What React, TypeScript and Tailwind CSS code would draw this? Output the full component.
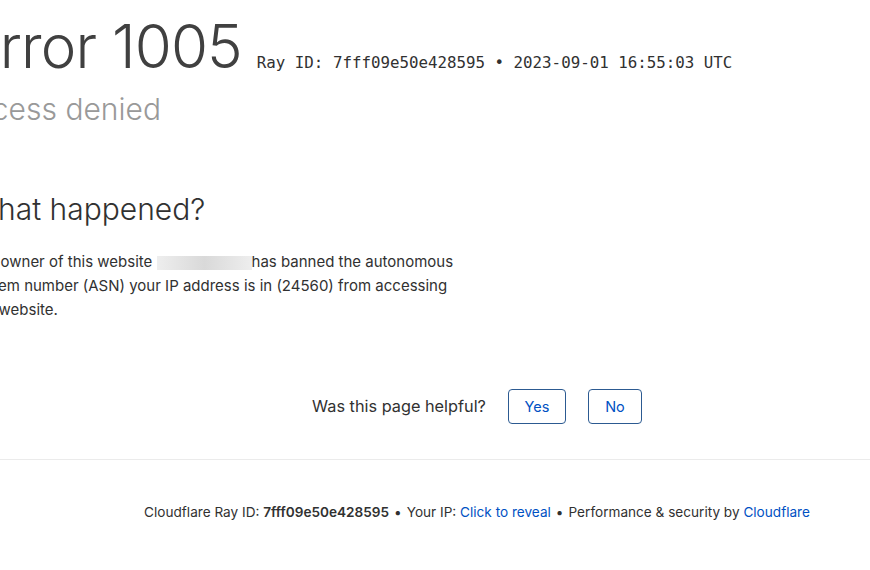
import React from "react";

export default function App() {
  const sans = { fontFamily: 'Inter, "Noto Sans", sans-serif' };
  return (
    <div className="w-[870px] h-[570px] overflow-hidden bg-white" style={sans}>
      <div className="w-[1016px] ml-[-31px]">
        <div className="pt-[9px]">
          <div className="flex items-baseline">
            <h1 className="ml-[-4px] text-[60px] leading-[75px] font-light text-[#404040] mr-[15px] tracking-[-0.9px]">Error 1005</h1>
            <span className="text-[15.8px] text-[#313131] font-['DejaVu_Sans_Mono',monospace]">Ray ID: 7fff09e50e428595 &bull; 2023-09-01 16:55:03 UTC</span>
          </div>
          <h2 className="mt-[6px] ml-[-14px] text-[30px] leading-[39px] font-light text-[#999999]">Access denied</h2>
        </div>
        <div className="mt-[61px]">
          <h2 className="text-[30px] leading-[39px] font-light text-[#313131]">What happened?</h2>
          <p className="mt-[21px] w-[500px] text-[15px] leading-[24px] text-[#313131]">
            The owner of this website{" "}
            <span className="inline-block align-middle w-[95px] h-[14px] bg-gradient-to-r from-[#eeeeee] via-[#d9d9d9] to-[#eeeeee]"></span>
            has banned the autonomous system number (ASN) your IP address is in (24560) from accessing this website.
          </p>
        </div>
        <div className="mt-[67px] flex items-center justify-center gap-[22px]">
          <span className="text-[16.3px] text-[#313131]">Was this page helpful?</span>
          <button className="w-[58px] h-[35px] border border-[#2c5a91] rounded-[4px] text-[14.5px] text-[#0051c3]">Yes</button>
          <button className="w-[54px] h-[35px] border border-[#2c5a91] rounded-[4px] text-[14.5px] text-[#0051c3]">No</button>
        </div>
        <div className="mt-[35px] border-t border-[#ebebeb]"></div>
        <div className="pt-[42px] text-center text-[13.6px] text-[#313131]">
          Cloudflare Ray ID: <strong className="font-semibold">7fff09e50e428595</strong>
          <span className="mx-[5px]">&bull;</span>
          Your IP: <span className="text-[#0051c3]">Click to reveal</span>
          <span className="mx-[5px]">&bull;</span>
          Performance &amp; security by <span className="text-[#0051c3]">Cloudflare</span>
        </div>
      </div>
    </div>
  );
}
